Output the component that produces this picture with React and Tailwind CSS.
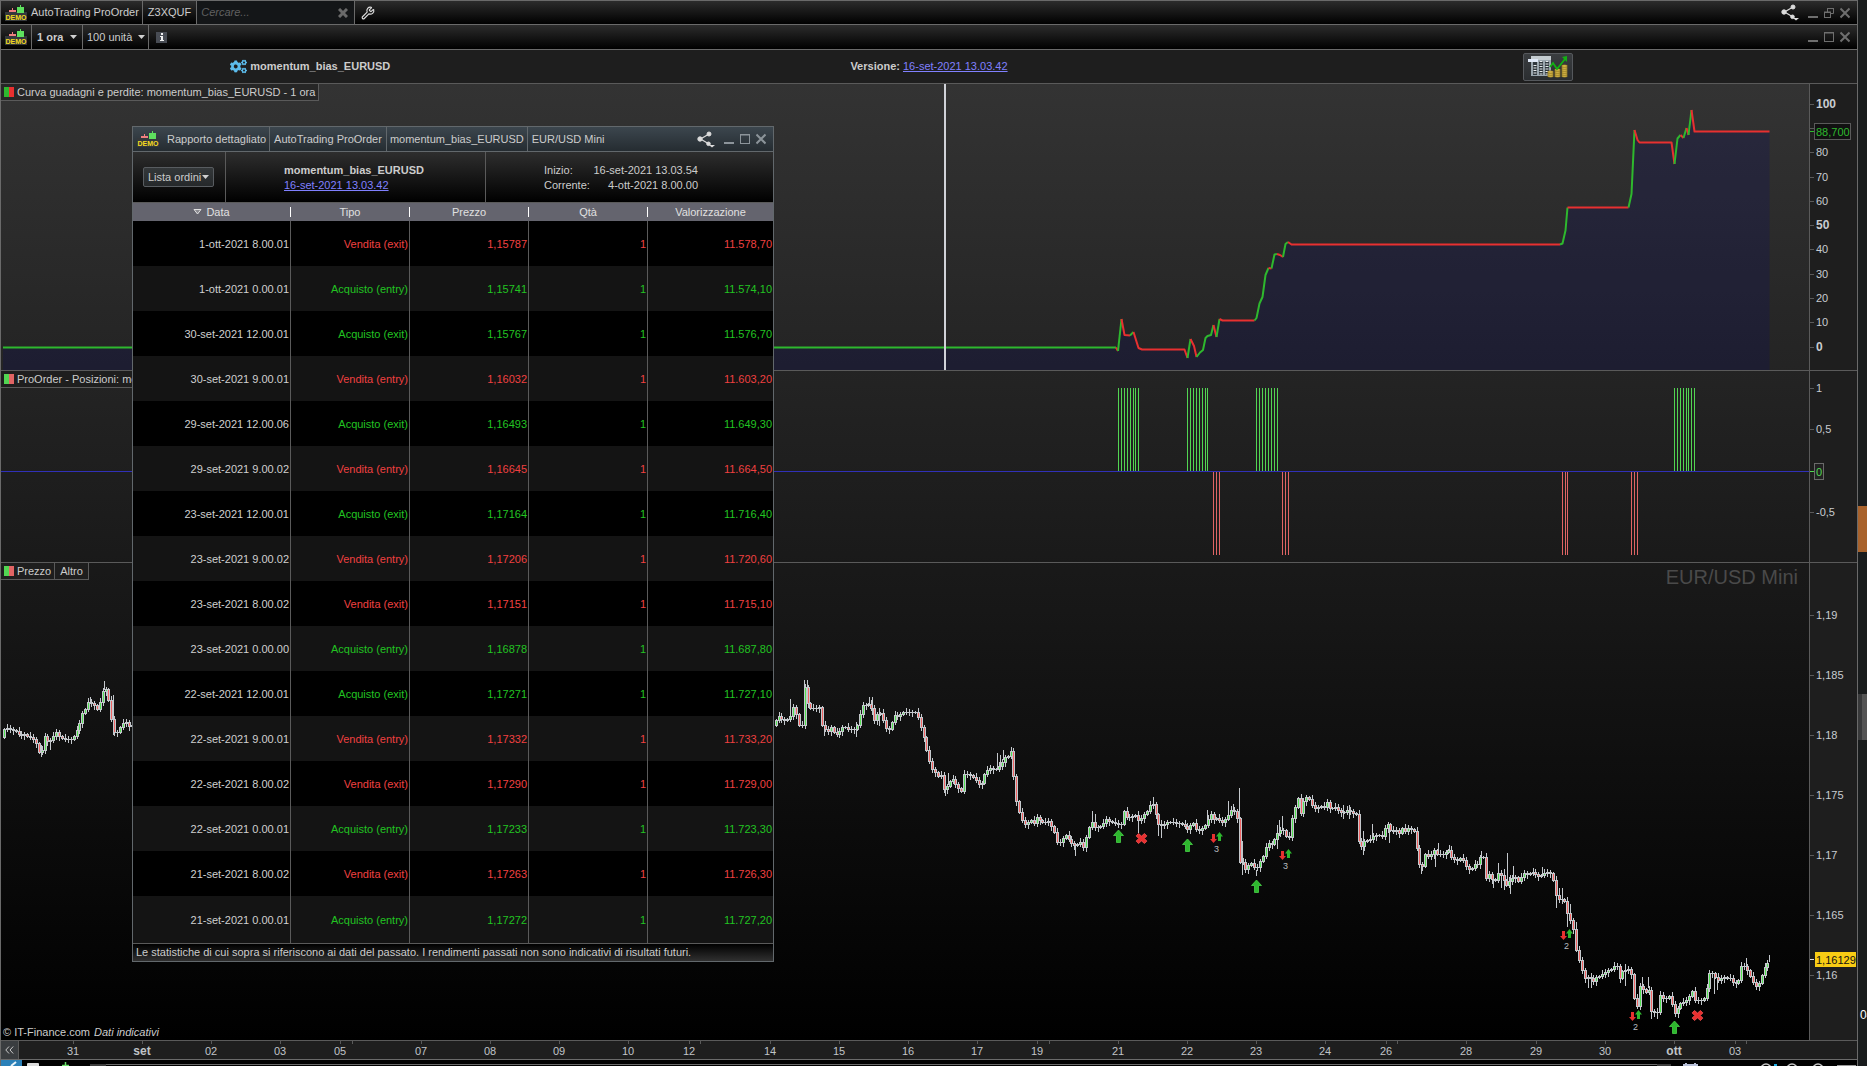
import { FaCogs } from "react-icons/fa";
import { Wrench } from "lucide-react";

const GREEN = "#2eb82e";
const RED = "#e83030";

const orders = [
  ["1-ott-2021 8.00.01", "Vendita (exit)", "1,15787", "1", "11.578,70"],
  ["1-ott-2021 0.00.01", "Acquisto (entry)", "1,15741", "1", "11.574,10"],
  ["30-set-2021 12.00.01", "Acquisto (exit)", "1,15767", "1", "11.576,70"],
  ["30-set-2021 9.00.01", "Vendita (entry)", "1,16032", "1", "11.603,20"],
  ["29-set-2021 12.00.06", "Acquisto (exit)", "1,16493", "1", "11.649,30"],
  ["29-set-2021 9.00.02", "Vendita (entry)", "1,16645", "1", "11.664,50"],
  ["23-set-2021 12.00.01", "Acquisto (exit)", "1,17164", "1", "11.716,40"],
  ["23-set-2021 9.00.02", "Vendita (entry)", "1,17206", "1", "11.720,60"],
  ["23-set-2021 8.00.02", "Vendita (exit)", "1,17151", "1", "11.715,10"],
  ["23-set-2021 0.00.00", "Acquisto (entry)", "1,16878", "1", "11.687,80"],
  ["22-set-2021 12.00.01", "Acquisto (exit)", "1,17271", "1", "11.727,10"],
  ["22-set-2021 9.00.01", "Vendita (entry)", "1,17332", "1", "11.733,20"],
  ["22-set-2021 8.00.02", "Vendita (exit)", "1,17290", "1", "11.729,00"],
  ["22-set-2021 0.00.01", "Acquisto (entry)", "1,17233", "1", "11.723,30"],
  ["21-set-2021 8.00.02", "Vendita (exit)", "1,17263", "1", "11.726,30"],
  ["21-set-2021 0.00.01", "Acquisto (entry)", "1,17272", "1", "11.727,20"],
];

const columns = [
  { label: "Data", width: "w-[158px]" },
  { label: "Tipo", width: "w-[119px]" },
  { label: "Prezzo", width: "w-[119px]" },
  { label: "Qtà", width: "w-[119px]" },
  { label: "Valorizzazione", width: "" },
];

// every run continues from the last point of the previous one
const equity = [
  ["g", [3, 347.5], [1116, 347.5]],
  ["r", [1118, 351]],
  ["g", [1121.5, 319]],
  ["r", [1124.5, 335], [1130, 335.5]],
  ["g", [1133.5, 332]],
  ["r", [1138.5, 348], [1142, 349.5], [1184.5, 349.5], [1187.5, 358]],
  ["g", [1190.5, 339]],
  ["r", [1194, 346], [1196.5, 357]],
  ["g", [1200, 352.5], [1203, 350], [1205.5, 338], [1207.5, 336], [1211, 335], [1213.5, 325]],
  ["r", [1216.5, 337]],
  ["g", [1219.5, 319]],
  ["r", [1222.5, 320.5], [1254.5, 320.5]],
  ["g", [1256.5, 318], [1259.5, 303.5], [1262.5, 297], [1265.5, 275], [1268.5, 268]],
  ["r", [1271.5, 268.5]],
  ["g", [1274.5, 254.5], [1277, 254]],
  ["r", [1280, 255], [1283, 257]],
  ["g", [1285.5, 244], [1288, 242]],
  ["r", [1291.5, 244.5], [1560, 244.5]],
  ["g", [1562.5, 243.5], [1565.5, 230.5], [1567.5, 207.5]],
  ["r", [1628.5, 207.5]],
  ["g", [1631.5, 194], [1634.5, 130]],
  ["r", [1637.5, 140], [1639.5, 142.5], [1671.5, 142.5], [1674.5, 164]],
  ["g", [1677.5, 138.5], [1680.5, 135]],
  ["r", [1683.5, 138]],
  ["g", [1686.5, 128]],
  ["r", [1688.5, 135]],
  ["g", [1691.5, 110]],
  ["r", [1694.5, 131.5], [1769.5, 131.5]],
];

const longBars = [
  1118, 1121, 1124, 1127, 1130, 1133, 1135, 1138,
  1187, 1190, 1193, 1196, 1199, 1202, 1205, 1207,
  1256, 1259, 1262, 1265, 1268, 1271, 1274, 1277,
  1674, 1677, 1680, 1683, 1686, 1688, 1691, 1694,
];
const shortBars = [1213, 1216, 1219, 1282, 1285, 1288, 1562, 1565, 1567, 1631, 1634, 1637];

// price path, stored as x,y pairs on a finer grid: [originX, originY, stepsPerX, stepsPerY, pairs]
const pricePaths = [
  [[0, 360, 3, 3, "9,1131 12,1107 21,1104 36,1110 51,1116 60,1128 72,1122 84,1128 96,1134 106,1140 114,1176 124,1176 133,1128 144,1146 156,1134 168,1116 180,1131 198,1137 216,1137 228,1113 237,1098 243,1056 252,1062 261,1026 273,1029 285,1038 294,1053 303,1005 312,981 321,993 330,1050 339,1110 348,1125 357,1104 366,1095 375,1080 384,1098 395,1095"]],
  [
    [770, 660, 3, 3, "14,195 20,163 35,178 47,180 60,172 66,138 75,150 85,190 94,215 103,75 112,127 121,145 148,142 157,200 166,208 175,213 184,198 193,222 202,220 211,210 220,198 230,205 240,208 258,206 268,168 277,135 290,135 299,128 306,150 314,185 322,160 332,158 341,185 350,212 360,205 370,165 385,168 398,155 440,157 446,185 457,215 466,257 475,293 484,325 493,330 502,350 512,338 520,390 530,380 538,362 548,358 557,372 568,388 576,393 583,338 600,345 612,352 624,372 638,370 643,342 660,322 672,330 680,325 694,308 703,292 712,290 721,268 728,320 734,390 743,448 752,465 761,493 772,488 785,478 795,495 800,472 815,488 836,482 845,500 854,520 860,545 872,548 884,522 892,532 900,545 908,550 918,560 928,540 938,565 947,535 957,500 966,485 975,503 990,500 1000,490 1008,478 1020,485 1040,490 1052,493 1058,445 1066,470 1085,470 1095,465 1102,475 1108,490 1116,465 1130,455 1143,425 1152,440 1160,475 1167,498 1180,495 1187,486 1210,485 1225,490 1240,495 1250,502 1257,515 1263,485 1272,490 1280,512 1290,510 1302,500 1312,480 1322,462 1335,485 1343,465 1352,490 1362,480 1372,470 1380,450 1395,455 1402,480 1408,605 1422,608 1428,632 1438,610 1448,608 1456,632 1466,608 1473,600"],
    [1230, 740, 3, 3, "88,370 97,352 106,322 115,310 126,312 135,292 148,270 158,268 167,288 180,290 184,240 193,205 202,170 212,222 218,188 228,170 240,178 248,200 258,205 272,198 284,200 292,182 298,205 318,200 326,212 340,218 352,208 366,218 378,222 383,295 392,322 401,305 415,300 428,290 440,285 455,288 461,270 470,248 480,268 488,275 497,265 506,284 515,260 522,278 532,265 550,266 557,305 565,365 575,385 583,358 590,320 598,372 607,320 618,340 635,345 655,328 663,350 680,360 695,353 712,385 722,390 730,372 742,375 748,350 760,350 765,430 773,392 782,415 795,420 806,392 817,415 832,438 842,415 858,412 868,430 876,398 890,402 912,395 922,410 938,402 950,395 960,398 970,425 980,480 1000,475 1008,492 1014,530 1024,545 1032,575 1041,655 1050,662 1058,700 1068,720 1077,702 1088,730 1095,712 1115,705 1128,692 1140,690 1150,678 1162,678 1170,722 1178,690 1196,688"],
    [1580, 360, 3, 2.22, "150,1355 157,1370 165,1442 174,1430 179,1390 188,1395 196,1405 205,1395 214,1445 232,1448 236,1407 250,1418 268,1412 278,1435 287,1458 295,1430 310,1425 325,1418 335,1398 345,1420 368,1420 378,1410 382,1372 390,1358 402,1362 410,1378 430,1370 450,1372 462,1385 475,1378 484,1345 497,1345 508,1365 518,1380 530,1392 540,1378 552,1350 562,1340 571,1332"],
  ],
];

const longWicks = [
  [104, 681, 690], [113, 695, 735], [41, 745, 757], [90, 697, 704], [50, 738, 750],
  [790, 699, 715], [804, 680, 690], [807, 680, 700], [869, 697, 705], [872, 697, 715], [879, 708, 726], [856, 722, 737],
  [824, 725, 736], [997, 753, 770], [1000, 755, 768], [1003, 750, 760], [945, 780, 796], [948, 773, 785],
  [1075, 845, 856], [1092, 811, 822], [1095, 814, 826], [1138, 815, 833], [1153, 797, 805], [1158, 820, 836],
  [1161, 825, 838], [1207, 810, 825], [1228, 801, 815], [1233, 804, 812], [1239, 788, 820], [1242, 841, 875],
  [1256, 870, 876], [1277, 825, 849], [1279, 820, 836], [1282, 816, 830], [1343, 805, 819], [1349, 805, 819],
  [1363, 831, 855], [1360, 831, 840], [1372, 824, 836], [1389, 825, 843], [1421, 865, 874], [1435, 850, 867],
  [1438, 843, 855], [1449, 845, 850], [1481, 851, 857], [1498, 863, 870], [1493, 875, 888], [1501, 875, 888],
  [1504, 869, 890], [1507, 853, 885], [1510, 875, 894], [1513, 866, 880], [1542, 867, 875], [1556, 895, 908],
  [1559, 888, 900], [1562, 888, 900], [1567, 905, 927], [1570, 904, 922], [1576, 922, 935], [1588, 975, 988],
  [1591, 975, 988], [1625, 964, 986], [1642, 977, 990], [1648, 977, 988], [1651, 1005, 1019], [1657, 1008, 1019],
  [1714, 975, 994], [1717, 978, 990], [1746, 958, 967], [1769, 955, 962],
];

function buildCandles(parts) {
  const pts = parts.flatMap(([ox, oy, kx, ky, pairs]) =>
    pairs.split(" ").map((p) => {
      const [x, y] = p.split(",").map(Number);
      return [ox + x / kx, oy + y / ky];
    })
  );
  const at = (x) => {
    let i = 1;
    while (i < pts.length - 1 && pts[i][0] < x) i++;
    const [x0, y0] = pts[i - 1];
    const [x1, y1] = pts[i];
    return y0 + ((y1 - y0) * (x - x0)) / (x1 - x0);
  };
  const out = [];
  const end = pts[pts.length - 1][0];
  let open = Math.round(pts[0][1]);
  let n = 0;
  for (let x = pts[0][0] + 1; x <= end; x += 2.9) {
    const close = Math.round(at(x));
    out.push({
      x: Math.round(x),
      top: Math.min(open, close),
      bottom: Math.max(open, close),
      up: close === open ? n % 2 === 0 : close < open,
      over: 1 + ((n * 7) % 4),
      under: 1 + ((n * 5) % 4),
    });
    open = close;
    n++;
  }
  return out;
}

const candles = pricePaths.flatMap(buildCandles);

const days = [
  [73, "31"], [142, "set"], [211, "02"], [280, "03"], [340, "05"], [421, "07"], [490, "08"], [559, "09"],
  [628, "10"], [689, "12"], [770, "14"], [839, "15"], [908, "16"], [977, "17"], [1037, "19"], [1118, "21"],
  [1187, "22"], [1256, "23"], [1325, "24"], [1386, "26"], [1466, "28"], [1536, "29"], [1605, "30"],
  [1674, "ott"], [1735, "03"],
];
const weekTicks = [352, 700, 1049, 1397, 1746];

const DemoIcon = () => (
  <svg width="22" height="16" viewBox="0 0 22 16" className="shrink-0" shapeRendering="crispEdges">
    <rect x="0" y="7" width="22" height="9" fill="#34383c" />
    <rect x="7" y="3" width="1" height="2" fill="#f08080" />
    <rect x="4" y="5" width="7" height="2" fill="#f08080" />
    <rect x="15" y="0" width="1" height="2" fill="#5ee05e" />
    <rect x="12" y="2" width="7" height="6" fill="#5ee05e" />
    <text x="11" y="15" textAnchor="middle" fontSize="7" fontWeight="bold" fill="#f5dc1e" shapeRendering="auto">
      DEMO
    </text>
  </svg>
);

const ShareIcon = () => (
  <svg width="19" height="17" viewBox="0 0 19 17" fill="#dcdcdc" stroke="#dcdcdc">
    <path d="M3.5 8 L12 3 M3.5 8 L12 13" fill="none" strokeWidth="1.3" />
    <circle cx="3" cy="8" r="2.2" />
    <circle cx="12" cy="3" r="2" />
    <circle cx="11.5" cy="12.8" r="1.8" />
    <path d="M12 14h6l-3 2.6z" stroke="none" />
  </svg>
);

const WindowButtons = ({ restore, color = "#6e6e6e" }) => (
  <div className="flex items-center gap-[6px]">
    <button aria-label="Riduci">
      <svg width="10" height="12" viewBox="0 0 10 12" className="block">
        <rect y="9" width="10" height="2" fill={color} />
      </svg>
    </button>
    <button aria-label="Ingrandisci">
      <svg width="10" height="12" viewBox="0 0 10 12" className="block" fill="none" stroke={color}>
        {restore ? (
          <>
            <path d="M3.5 5V1.5h6v5H7" />
            <path d="M3 1.5h7M0 5.5h7" />
            <rect x="0.5" y="5" width="6" height="5.5" />
          </>
        ) : (
          <>
            <rect x="0.5" y="1.5" width="9" height="9" />
            <path d="M0 2h10" />
          </>
        )}
      </svg>
    </button>
    <button aria-label="Chiudi">
      <svg width="10" height="12" viewBox="0 0 10 12" className="block" stroke={color} strokeWidth="2">
        <path d="M0.5 1.5l9 9M9.5 1.5l-9 9" />
      </svg>
    </button>
  </div>
);

const Caret = () => (
  <svg width="7" height="4" viewBox="0 0 7 4" className="pointer-events-none shrink-0">
    <path d="M0 0h7L3.5 4z" fill="#d0d0d0" />
  </svg>
);

const ReportIcon = () => (
  <svg width="40" height="22" viewBox="0 0 40 22">
    <rect x="3" y="0" width="20" height="20" fill="#9aa6ae" />
    <rect x="3" y="0" width="20" height="4" fill="#c4ccd0" />
    <rect x="5" y="5" width="4" height="14" fill="#30383e" />
    <rect x="11" y="5" width="4" height="14" fill="#30383e" />
    <rect x="17" y="5" width="4" height="14" fill="#30383e" />
    <path d="M7 9v10M13 5v14M19 5v14" stroke="#e8ecee" strokeWidth="3" strokeDasharray="1 1.5" />
    <rect x="0" y="3" width="10" height="3" fill="#dfe8f6" />
    <g fill="#d8b848" stroke="#6e5a14" strokeWidth="0.5">
      {[20, 18, 16].map((y) => <ellipse key={y} cx="22.5" cy={y} rx="3" ry="1.3" />)}
      {[20, 18, 16, 14].map((y) => <ellipse key={y} cx="29.5" cy={y} rx="3" ry="1.3" />)}
      {[20, 18, 16, 14, 12, 10].map((y) => <ellipse key={y} cx="36.5" cy={y} rx="3" ry="1.3" />)}
    </g>
    <path d="M22 11l3-4 4 6 8-10" fill="none" stroke="#12b012" strokeWidth="1.8" />
    <path d="M34 1l5-1v6z" fill="#12b012" />
  </svg>
);

const Swatch = ({ soft }) => (
  <span className="flex size-[10px] shrink-0">
    <span className={`flex-1 ${soft ? "bg-[#52d552]" : "bg-[#2eb82e]"}`} />
    <span className={`flex-1 ${soft ? "bg-[#e06464]" : "bg-[#e83030]"}`} />
  </span>
);

// right-hand scale: backdrop, divider, ticks and values
const Scale = ({ top, height, marks, children }) => (
  <g>
    <rect x="1809" y={top} width="49" height={height} fill="#1e1e1e" />
    <rect x="1809" y={top} width="1" height={height} fill="#5a5a5a" />
    {marks.map(([y, label, bold]) => (
      <g key={label}>
        <rect x="1810" y={y} width="4" height="1" fill="#5a5a5a" />
        <text x="1816" y={y + 4} fontSize={bold ? 12 : 11} fontWeight={bold ? "bold" : "normal"} fill="#c8ccd0">
          {label}
        </text>
      </g>
    ))}
    {children}
  </g>
);

const EquityPanel = () => {
  let last = null;
  const runs = equity.map(([color, ...pts]) => {
    const all = last ? [last, ...pts] : pts;
    last = pts[pts.length - 1];
    return { color, d: all.map((p) => p.join(",")).join(" ") };
  });
  const outline = equity.flatMap(([, ...pts]) => pts).map((p) => p.join(",")).join(" ");

  return (
    <section className="relative min-h-0 flex-[286_1_0px] border-b border-[#5a5a5a]">
      <svg className="block h-full w-full" viewBox="1 84 1856 286" preserveAspectRatio="xMaxYMid slice">
        <polygon points={`3,370 ${outline} 1769.5,370`} fill="#050569" fillOpacity="0.2" />
        {runs.map((r, i) => (
          <polyline
            key={i}
            points={r.d}
            fill="none"
            stroke={r.color === "g" ? GREEN : RED}
            strokeWidth="2"
            strokeLinejoin="round"
          />
        ))}
        <rect x="944" y="84" width="2" height="286" fill="#d0d2d8" />
        <Scale
          top={84}
          height={286}
          marks={[
            [104, "100", true], [152, "80"], [177, "70"], [201, "60"], [225, "50", true],
            [249, "40"], [274, "30"], [298, "20"], [322, "10"], [347, "0", true],
          ]}
        >
          <rect x="1810" y="128" width="4" height="1" fill="#5a5a5a" />
          <rect x="1810" y="131" width="4" height="1" fill={GREEN} />
          <rect x="1814.5" y="123.5" width="36" height="16" fill="#111" stroke="#5a5a5a" />
          <text x="1816" y="136" fontSize="11" fill={GREEN}>88,700</text>
        </Scale>
      </svg>
      <div className="absolute top-0 left-0 flex h-[17px] items-center gap-[3px] border-r border-b border-[#5a5a5a] bg-[#262626] pr-[3px] pl-[3px]">
        <Swatch />
        Curva guadagni e perdite: momentum_bias_EURUSD - 1 ora
      </div>
    </section>
  );
};

const PositionsPanel = () => (
  <section className="relative min-h-0 flex-[191_1_0px] border-b border-[#5a5a5a]">
    <svg
      className="block h-full w-full"
      viewBox="1 371 1856 191"
      preserveAspectRatio="xMaxYMid slice"
    >
      {longBars.map((x) => <rect key={x} x={x} y="388" width="1" height="83" fill="#52d552" />)}
      {shortBars.map((x) => <rect key={x} x={x} y="472" width="1" height="83" fill="#e06464" />)}
      <rect x="1" y="471" width="1808" height="1" fill="#3030b8" />
      <Scale top={371} height={191} marks={[[388, "1"], [429, "0,5"], [512, "-0,5"]]}>
        <rect x="1810" y="471" width="4" height="1" fill="#52d552" />
        <rect x="1814.5" y="463.5" width="9" height="16" fill="#222" stroke="#6a6a6a" />
        <text x="1816" y="476" fontSize="11" fill="#52d552">0</text>
      </Scale>
    </svg>
    <div className="absolute top-0 left-0 flex h-[17px] w-[131px] items-center gap-[3px] overflow-hidden border-b border-[#5a5a5a] bg-[#1e1e1e] pl-[3px] whitespace-nowrap">
      <Swatch soft />
      ProOrder - Posizioni: momentum_bias_EURUSD
    </div>
  </section>
);

const BigUp = ({ x, y }) => (
  <path
    d={`M${x} ${y}l5 5.5h-3v7h-4v-7h-3z`}
    fill={GREEN}
    stroke="#48d048"
    strokeWidth="0.8"
  />
);

const Cross = ({ x, y }) => (
  <path
    d={`M${x - 3} ${y - 5}l3 2.6l3 -2.6l2.4 2.4l-2.6 2.6l2.6 2.6l-2.4 2.4l-3 -2.6l-3 2.6l-2.4 -2.4l2.6 -2.6l-2.6 -2.6z`}
    fill={RED}
    stroke="#f05050"
    strokeWidth="0.8"
  />
);

const Pair = ({ x, y, count }) => (
  <g>
    <path d={`M${x} ${y + 11}l-3.5 -4h2v-5h3v5h2z`} fill={RED} />
    <path d={`M${x + 6} ${y}l3.5 4.5h-2v4.5h-3v-4.5h-2z`} fill={GREEN} />
    <text x={x + 3} y={y + 20} fontSize="9" textAnchor="middle" fill="#b8bcc0">{count}</text>
  </g>
);

const PricePanel = () => (
  <section className="relative min-h-0 flex-[477_1_0px] border-b border-[#5a5a5a]">
    <svg className="block h-full w-full" viewBox="1 563 1856 477" preserveAspectRatio="xMaxYMid slice">
      <text x="1798" y="584" fontSize="20" textAnchor="end" fill="#4a4a4a">EUR/USD Mini</text>
      <g shapeRendering="crispEdges">
        {candles.map((c) => (
          <rect
            key={`w${c.x}`}
            x={c.x}
            y={c.top - c.over}
            width="1"
            height={c.bottom - c.top + c.over + c.under + 1}
            fill="#c4c8cc"
          />
        ))}
        {longWicks.map(([x, a, b]) => (
          <rect key={`l${x}`} x={x} y={a} width="1" height={b - a} fill="#c4c8cc" />
        ))}
        {candles.map((c) => (
          <g key={c.x}>
            <rect x={c.x - 1} y={c.top} width="3" height={c.bottom - c.top + 1} fill="#c4c8cc" />
            {c.bottom - c.top > 1 && (
              <rect
                x={c.x}
                y={c.top + 1}
                width="1"
                height={c.bottom - c.top - 1}
                fill={c.up ? "#52e052" : "#f06464"}
              />
            )}
          </g>
        ))}
      </g>
      <BigUp x={1118.5} y={830} />
      <Cross x={1141.5} y={838.5} />
      <BigUp x={1187.5} y={839} />
      <Pair x={1213.5} y={832} count="3" />
      <BigUp x={1256.5} y={880} />
      <Pair x={1282.5} y={849} count="3" />
      <Pair x={1563.5} y={929} count="2" />
      <Pair x={1632.5} y={1010} count="2" />
      <BigUp x={1674.5} y={1021} />
      <Cross x={1697.5} y={1015.5} />
      <Scale
        top={563}
        height={477}
        marks={[
          [615, "1,19"], [675, "1,185"], [735, "1,18"], [795, "1,175"],
          [855, "1,17"], [915, "1,165"], [975, "1,16"],
        ]}
      >
        <rect x="1810" y="959" width="4" height="1" fill="#e0e0e0" />
        <rect x="1815" y="952" width="41" height="15" fill="#f8cc14" />
        <text x="1816" y="964" fontSize="11" fill="#111">1,16129</text>
      </Scale>
    </svg>
    <div className="absolute top-0 left-0 flex h-[17px] border-r border-b border-[#5a5a5a] bg-[#1e1e1e]">
      <div className="flex items-center gap-[3px] border-r border-[#5a5a5a] pr-[3px] pl-[3px]">
        <Swatch soft />
        Prezzo
      </div>
      <div className="flex items-center px-[5px]">Altro</div>
    </div>
    <p className="absolute bottom-0 left-0 pl-[2px]">
      © IT-Finance.com <em className="pl-px">Dati indicativi</em>
    </p>
  </section>
);

const TimeAxis = () => (
  <div className="relative h-[19px] shrink-0 border-b border-[#6a6a6a] bg-[#1e1e1e]">
    <svg className="block h-full w-full" viewBox="1 1041 1856 18" preserveAspectRatio="xMaxYMid slice">
      {days.map(([x, label]) => {
        const month = label === "set" || label === "ott";
        return (
          <g key={x}>
            <rect x={x} y="1041" width="1" height="3" fill="#5a5a5a" />
            <text
              x={x}
              y="1055"
              textAnchor="middle"
              fontSize={month ? 12 : 11}
              fontWeight={month ? "bold" : "normal"}
              fill="#c0c4c8"
            >
              {label}
            </text>
          </g>
        );
      })}
      {weekTicks.map((x) => <rect key={x} x={x} y="1041" width="1" height="3" fill="#5a5a5a" />)}
    </svg>
    <button
      aria-label="Indietro"
      className="absolute inset-y-0 left-0 flex w-[18px] items-center justify-center border-r border-[#5a5a5a] bg-[#3a3d40]"
    >
      <svg width="9" height="8" viewBox="0 0 9 8" fill="none" stroke="#c8c8c8">
        <path d="M4 0.5L0.8 4L4 7.5M8.2 0.5L5 4l3.2 3.5" />
      </svg>
    </button>
  </div>
);

const ReportWindow = () => (
  <div className="absolute top-[126px] left-[132px] w-[642px] border border-[#62686c] bg-[#141414]">
    <div className="flex h-[25px] items-stretch border-b border-[#62686c] bg-linear-to-b/srgb from-[#3c464e] to-[#252c31]">
      <div className="flex items-center gap-2 border-r border-[#62686c] pr-[3px] pl-1">
        <DemoIcon />
        <span>Rapporto dettagliato</span>
      </div>
      <div className="flex items-center border-r border-[#62686c] px-1">AutoTrading ProOrder</div>
      <div className="flex items-center border-r border-[#62686c] px-[3px]">momentum_bias_EURUSD</div>
      <div className="flex items-center px-1">EUR/USD Mini</div>
      <div className="ml-auto flex items-center gap-[8px] pr-[7px]">
        <button aria-label="Condividi"><ShareIcon /></button>
        <WindowButtons color="#8c949a" />
      </div>
    </div>

    <div className="flex h-[51px] border-b border-[#5a5a5a] bg-linear-to-b/srgb from-[#2e2e2e] to-black">
      <div className="flex w-[93px] items-center border-r border-[#5a5a5a] pl-[10px]">
        <label className="flex h-[20px] items-center rounded-xs border border-[#585c60] bg-linear-to-b/srgb from-[#34383a] to-[#25282a] pr-1 pl-1">
          <select aria-label="Vista" className="w-[54px] appearance-none bg-transparent outline-none">
            <option>Lista ordini</option>
          </select>
          <Caret />
        </label>
      </div>
      <div className="w-[260px] border-r border-[#5a5a5a] pt-[11px] pl-[58px]">
        <p className="leading-[15px] font-bold">momentum_bias_EURUSD</p>
        <a href="#versione" className="block leading-[15px] text-[#8080ff] underline">16-set-2021 13.03.42</a>
      </div>
      <dl className="grid grid-cols-[46px_108px] content-start pt-[11px] pl-[58px] leading-[15px] whitespace-nowrap">
        <dt>Inizio:</dt>
        <dd className="text-right">16-set-2021 13.03.54</dd>
        <dt>Corrente:</dt>
        <dd className="text-right">4-ott-2021 8.00.00</dd>
      </dl>
    </div>

    <table className="w-full table-fixed border-separate border-spacing-0">
      <thead>
        <tr className="h-[18px] bg-[#64646e]">
          {columns.map((col, i) => (
            <th key={col.label} className={`p-0 font-normal text-[#e0e0e0] ${col.width}`}>
              <div className="flex items-center">
                <span className="flex flex-1 items-center justify-center gap-1">
                  {i === 0 && (
                    <svg width="9" height="6" viewBox="0 0 9 6" fill="#8a8a90" stroke="#e0e0e0">
                      <path d="M1 0.5h7L4.5 5z" />
                    </svg>
                  )}
                  {col.label}
                </span>
                {i < columns.length - 1 && <span className="h-[10px] w-px bg-white" />}
              </div>
            </th>
          ))}
        </tr>
      </thead>
      <tbody>
        {orders.map((row) => (
          <tr key={row[0]} className="h-[45px] odd:bg-black even:bg-[#141414] last:h-[47px]">
            {row.map((cell, i) => (
              <td
                key={i}
                className={`p-0 pt-[2px] pr-px text-right ${i < 4 ? "border-r border-[#5a5a5a]" : ""} ${
                  i === 0 ? "text-[#d0d0d0]" : row[1].startsWith("Vendita") ? "text-[#f04040]" : "text-[#22c322]"
                }`}
              >
                {cell}
              </td>
            ))}
          </tr>
        ))}
      </tbody>
    </table>

    <p className="h-[18px] border-t border-[#5a5a5a] bg-linear-to-b/srgb from-black to-[#303030] pl-[3px] leading-[17px]">
      Le statistiche di cui sopra si riferiscono ai dati del passato. I rendimenti passati non sono indicativi di
      risultati futuri.
    </p>
  </div>
);

const Taskbar = () => (
  <div className="h-[6px] shrink-0 overflow-hidden bg-black">
    <svg className="block h-full w-full" viewBox="0 1060 1856 6" preserveAspectRatio="xMinYMin slice">
      <rect x="0" y="1060" width="21" height="6" fill="#2a80b8" />
      <path d="M10 1066l5-4" stroke="#e8f2f8" strokeWidth="2" />
      <rect x="26" y="1063" width="12" height="4" rx="1" fill="#dcdcdc" />
      <path d="M64.5 1062v4M61 1065.5h7" stroke="#6ae06a" strokeWidth="1.5" />
      <rect x="89" y="1064" width="16" height="2" fill="#3c3c3c" />
      <rect x="105" y="1064" width="1551" height="1" fill="#6a6a6a" />
      <rect x="1656" y="1064" width="14" height="2" fill="#3c3c3c" />
      <path d="M1682 1065h15M1685 1063v3M1694 1063v3" stroke="#b8c0d8" strokeWidth="2" />
      <g fill="none" stroke="#c8c8c8" strokeWidth="1.5">
        <circle cx="1765" cy="1069" r="5" />
        <circle cx="1791" cy="1069" r="5" />
        <circle cx="1817" cy="1069" r="5" />
      </g>
      <rect x="1773" y="1064" width="3" height="2" fill="#20b0e8" />
      <rect x="1836" y="1065" width="19" height="1" fill="#9a9a9a" />
    </svg>
  </div>
);

export default function App() {
  return (
    <div className="relative flex h-screen overflow-hidden bg-[#1b1d1e] font-['Liberation_Sans',Arial,sans-serif] text-[11px] leading-[15px] text-[#cccccc]">
      <main className="flex min-w-0 flex-1 flex-col border-x border-t border-[#6a6a6a]">
        <header className="flex h-6 shrink-0 items-stretch border-b border-[#6a6a6a] bg-linear-to-b/srgb from-[#2c2c2c] to-black">
          <div className="flex items-center gap-1 border-r border-[#6a6a6a] pr-[3px] pl-1">
            <DemoIcon />
            <h1>AutoTrading ProOrder</h1>
          </div>
          <div className="flex items-center border-r border-[#6a6a6a] px-[5px]">Z3XQUF</div>
          <label className="flex w-[158px] items-center border-r border-[#6a6a6a] bg-[#141618] pr-[6px] pl-1">
            <input
              type="text"
              aria-label="Cercare"
              placeholder="Cercare..."
              className="min-w-0 flex-1 bg-transparent italic outline-none placeholder:text-[#606060]"
            />
            <svg width="10" height="10" viewBox="0 0 10 10" stroke="#6a6a6a" strokeWidth="3">
              <path d="M1 1l8 8M9 1l-8 8" />
            </svg>
          </label>
          <button aria-label="Impostazioni" className="px-[6px]">
            <Wrench size={14} strokeWidth={2} color="#dcdcdc" />
          </button>
          <div className="ml-auto flex items-center gap-[8px] pr-[7px]">
            <button aria-label="Condividi"><ShareIcon /></button>
            <WindowButtons restore />
          </div>
        </header>

        <div className="flex h-[25px] shrink-0 items-stretch border-b border-[#6a6a6a] bg-linear-to-b/srgb from-[#2c2c2c] to-black">
          <div className="flex items-center border-r border-[#6a6a6a] px-1">
            <DemoIcon />
          </div>
          <label className="flex items-center border-r border-[#6a6a6a] px-[5px]">
            <select aria-label="Periodo" className="w-[33px] appearance-none bg-transparent font-bold outline-none">
              <option>1 ora</option>
            </select>
            <Caret />
          </label>
          <label className="flex items-center border-r border-[#6a6a6a] pr-[3px] pl-1">
            <select aria-label="Unità" className="w-[51px] appearance-none bg-transparent outline-none">
              <option>100 unità</option>
            </select>
            <Caret />
          </label>
          <button aria-label="Informazioni" className="px-[7px]">
            <svg width="11" height="11" viewBox="0 0 11 11" shapeRendering="crispEdges">
              <rect width="11" height="11" fill="#484c54" />
              <path d="M5 1h2v2H5zM4 4h3v4h1v1H4V8h1V5H4z" fill="#f0f0f0" />
            </svg>
          </button>
          <div className="ml-auto flex items-center pr-[7px]">
            <WindowButtons />
          </div>
        </div>

        <div className="grid h-[34px] shrink-0 grid-cols-3 items-center justify-items-center border-b border-[#5a5a5a] bg-[#1e1e1e]">
          <div className="flex items-center gap-[3px] font-bold">
            <FaCogs size={17} color="#5cbcec" />
            momentum_bias_EURUSD
          </div>
          <div>
            <b>Versione:</b>{" "}
            <a href="#versione" className="text-[#8080ff] underline">16-set-2021 13.03.42</a>
          </div>
          <button
            aria-label="Rapporto dettagliato"
            className="flex h-[28px] w-[50px] items-center justify-center rounded-xs border border-[#55585c] bg-linear-to-b/srgb from-[#3a3d40] to-[#2a2d30]"
          >
            <ReportIcon />
          </button>
        </div>

        <div className="flex min-h-0 flex-1 flex-col bg-linear-to-b/srgb from-[#333333] to-black">
          <EquityPanel />
          <PositionsPanel />
          <PricePanel />
        </div>
        <TimeAxis />
        <Taskbar />
      </main>

      <aside className="flex w-[9px] shrink-0 flex-col overflow-hidden bg-[#191c1d]">
        <div className="mt-[506px] h-[46px] shrink-0 bg-[#a8622c]" />
        <div className="mt-[142px] h-[46px] shrink-0 border-l-4 border-[#38393a] bg-[#545454]" />
        <span className="mt-[267px] pl-[2px] text-xs text-white">04</span>
      </aside>

      <ReportWindow />
    </div>
  );
}
